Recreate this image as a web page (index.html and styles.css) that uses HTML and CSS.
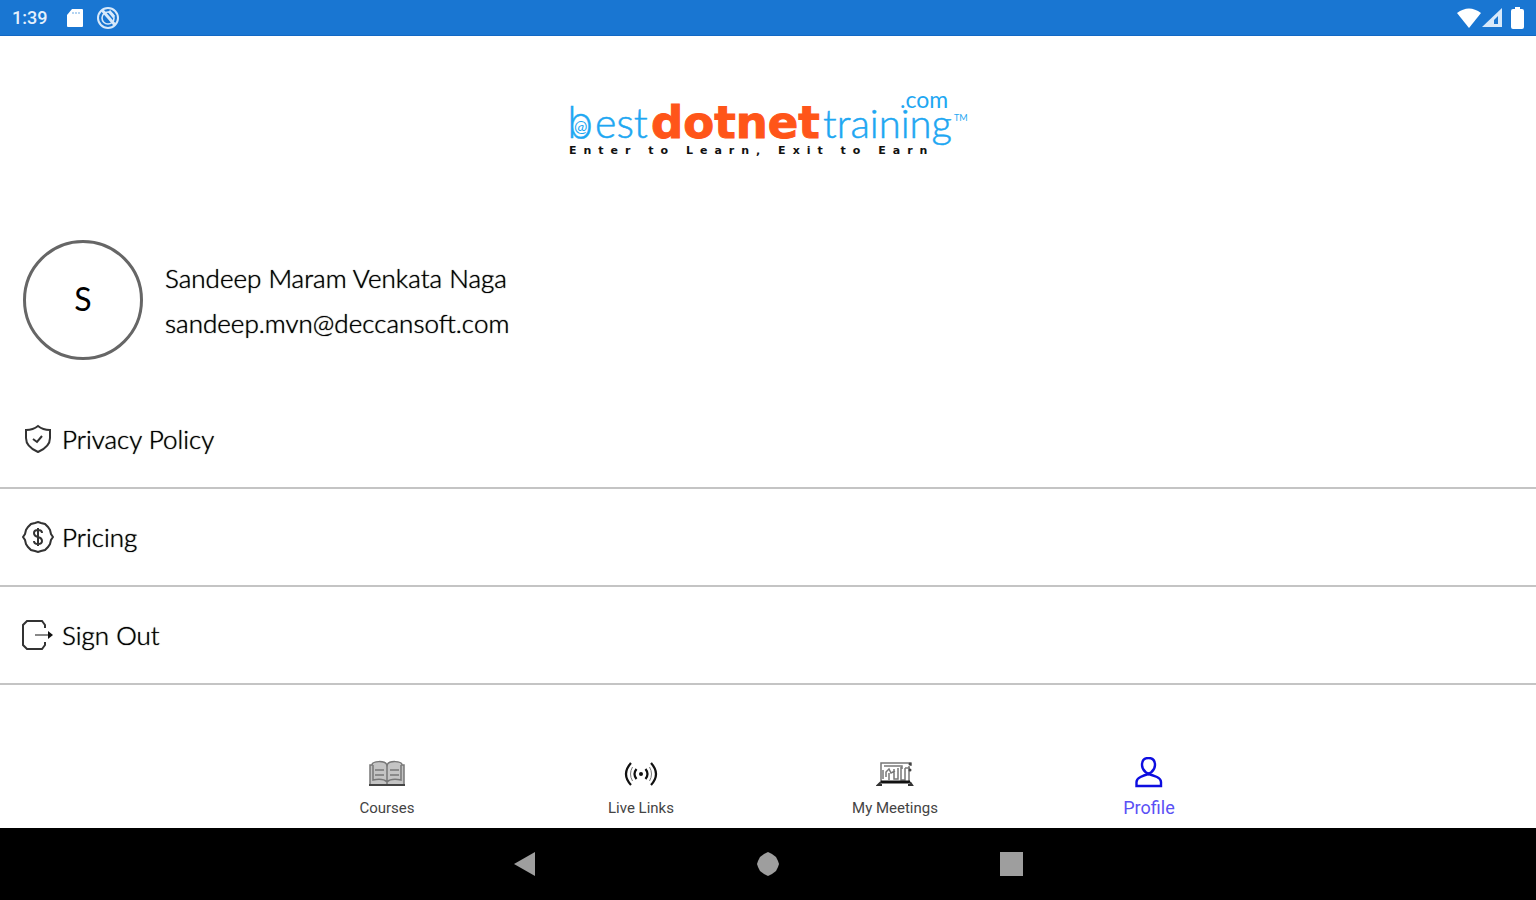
FILE: index.html
```html
<!DOCTYPE html>
<html lang="en">
<head>
<meta charset="utf-8">
<meta name="viewport" content="width=device-width, initial-scale=1">
<title>Profile</title>
<link rel="stylesheet" href="styles.css">
</head>
<body>
<header class="status">
  <div class="status-group">
    <time class="clock">1:39</time>
    <svg class="sd" width="18" height="20" viewBox="0 0 18 20" aria-hidden="true"><path d="M6 1h10a1 1 0 0 1 1 1v16a1 1 0 0 1-1 1H2a1 1 0 0 1-1-1V7z" fill="#fff"/><path d="M7 4v2M10 4v2M13 4v2" stroke="#9cc6ee" stroke-width="1.5"/></svg>
    <svg width="24" height="24" viewBox="0 0 24 24" fill="none" stroke="#d8e9fa" stroke-width="2" aria-hidden="true"><circle cx="12" cy="12" r="10"/><circle cx="12" cy="12" r="6" stroke-width="1.6"/><path d="M6 4l13 15" stroke-width="3"/><path d="M13 5l5 6" stroke-width="3"/></svg>
  </div>
  <div class="status-group signals">
    <svg width="24" height="20" viewBox="0 0 24 20" aria-hidden="true"><path d="M0 5Q12-4 24 5L12 20z" fill="#fff"/></svg>
    <svg width="20" height="20" viewBox="0 0 20 20" aria-hidden="true"><path d="M0 19L20 0v19z" fill="#d8e9fa"/><path d="M12 16V12l4-4v8z" fill="#1976d2"/></svg>
    <svg class="battery" width="13" height="22" viewBox="0 0 13 22" aria-hidden="true"><path d="M4 0h5v2h2a2 2 0 0 1 2 2v16a2 2 0 0 1-2 2H2a2 2 0 0 1-2-2V4a2 2 0 0 1 2-2h2z" fill="#fff"/></svg>
  </div>
</header>

<main class="page">
  <svg class="logo" width="400" height="68" viewBox="0 0 400 68" role="img" aria-label="bestdotnettraining.com">
    <g class="logo-light">
      <text class="logo-b" x="-1" y="46" font-size="44">b</text>
      <text x="27" y="46" font-size="41">est</text>
      <text class="logo-small" x="6" y="40" font-size="16">@</text>
      <text x="255" y="46" font-size="40">training</text>
      <text class="logo-small" x="332" y="16" font-size="23">.com</text>
      <text class="logo-small" x="386" y="29" font-size="9">TM</text>
    </g>
    <text class="logo-bold" x="83" y="46" font-size="45">dotnet</text>
    <text class="logo-tag" x="1" y="62" font-size="11">Enter to Learn, Exit to Earn</text>
  </svg>

  <section class="user">
    <div class="avatar">S</div>
    <div class="user-text">
      <p class="line">Sandeep Maram Venkata Naga</p>
      <p class="line">sandeep.mvn@deccansoft.com</p>
    </div>
  </section>

  <ul class="menu">
    <li><a class="row" href="#privacy">
      <svg class="icon" viewBox="0 0 32 32" aria-hidden="true"><path d="M16 3c3 2.500 7 4 12 4v8c0 7-5 11-12 14C9 26 4 22 4 15V7c5 0 9-1.500 12-4z"/><path d="M11 16l4 3 5-6"/></svg>
      Privacy Policy</a></li>
    <li><a class="row" href="#pricing">
      <svg class="icon" viewBox="0 0 32 32" aria-hidden="true"><path d="M16 1l3 1 4 1 3 3 2 3 1 4 2 3-2 3-1 4-2 3-3 3-4 1-3 1-3-1-4-1-3-3-2-3-1-4-2-3 2-3 1-4 2-3 3-3 4-1z"/><path d="M20 12q0-3-4-3t-4 3 4 4 4 4-4 3-4-3M16 7v18"/></svg>
      Pricing</a></li>
    <li><a class="row" href="#signout">
      <svg class="icon" viewBox="0 0 32 32" aria-hidden="true"><path d="M23 9V6l-3-4H5L1 6v20l4 4h15l3-4v-3"/><path d="M13 16h14" stroke="#888"/><path d="M26 12l5 4-5 4z" fill="#111" stroke="none"/></svg>
      Sign Out</a></li>
  </ul>
</main>

<nav class="tabs">
  <a class="tab" href="#courses">
    <svg width="38" height="32" viewBox="0 0 38 32" fill="none" stroke="#777" stroke-width="1.5" aria-hidden="true"><path d="M2 28V8h2c0-4 13-5 15 0 2-5 15-4 15 0h2v20z" fill="#c4c4c4"/><path d="M19 8v19M5 8v15q10-2 14 2 4-4 14-2V8"/><path d="M7 13h9M7 18h9M22 13h9M22 18h9"/><path d="M1 28h36" stroke="#444" stroke-width="2"/></svg>
    Courses</a>
  <a class="tab" href="#live">
    <svg width="38" height="32" viewBox="0 0 38 32" fill="none" stroke="#111" stroke-width="2.200" aria-hidden="true"><circle cx="19" cy="17" r="2" fill="#111" stroke="none"/><path d="M14.500 12q-4 5 0 10M23.500 12q4 5 0 10"/><path d="M9 6q-10 11 0 22M29 6q10 11 0 22"/><path d="M10.500 10q-4 7 0 14M27.500 10q4 7 0 14" stroke="#777" stroke-width="1"/></svg>
    Live Links</a>
  <a class="tab" href="#meetings">
    <svg width="38" height="32" viewBox="0 0 38 32" fill="none" stroke="#777" stroke-width="1.500" aria-hidden="true"><path d="M5 25V6h30v3M33 9v16M8 9h18v3"/><path d="M7 22V13M10 20v-5l3-3 2 4 4-2M13 16v7M18 12v10h4V11M25 10v13h4V11M29 11h5"/><path d="M5 25h29" stroke="#111" stroke-width="3"/><path d="M5 25l-3 3h4M34 25l2 3h-4" stroke="#333" stroke-width="2"/><circle cx="34" cy="7" r="1.500" fill="#444" stroke="none"/><circle cx="34" cy="13" r="1.500" fill="#444" stroke="none"/></svg>
    My Meetings</a>
  <a class="tab active" href="#profile" aria-current="page">
    <svg width="38" height="32" viewBox="0 0 38 32" fill="none" stroke="#0d0de0" stroke-width="2.400" aria-hidden="true"><path d="M15.500 15Q12 12 12 8q0-7 6.500-7T25 8q0 4-3.500 7l-3 2z"/><path d="M18.500 17q-4 1-8 3-4 2-4 5v4H31v-4q0-3-4-5-5-2-8.500-3z"/></svg>
    Profile</a>
</nav>

<footer class="system">
  <button class="sys" aria-label="Back"><svg width="24" height="26" viewBox="0 0 24 26"><path d="M1 13L22 1v24z" fill="#9e9e9e"/></svg></button>
  <button class="sys" aria-label="Home"><svg width="24" height="26" viewBox="0 0 24 26"><path d="M12 1l4 2 4 3 2 4 1 3-1 3-2 4-4 3-4 2-4-2-4-3-2-4-1-3 1-3 2-4 4-3z" fill="#9e9e9e"/></svg></button>
  <button class="sys" aria-label="Recent apps"><svg width="24" height="26" viewBox="0 0 24 26"><path d="M1 1h23v24H1z" fill="#9e9e9e"/></svg></button>
</footer>
</body>
</html>
```
FILE: styles.css
```css
* { box-sizing: border-box; }
body {
  margin: 0;
  min-height: 100vh;
  display: flex;
  flex-direction: column;
  background: #fff;
  color: #000;
  font-family: Lato, sans-serif;
  font-size: 26px;
  font-weight: 300;
  line-height: 32px;
}
a { color: inherit; text-decoration: none; }
svg { display: block; flex: none; }

.status {
  display: flex;
  justify-content: space-between;
  align-items: center;
  height: 36px;
  padding: 0 12px;
  background: #1976d2;
  border-bottom: 1px solid #1268c4;
}
.status-group { display: flex; align-items: center; gap: 12px; }
.signals { gap: 1px; }
.battery { margin-left: 8px; }
.clock {
  width: 42px;
  color: #e4f0fc;
  font: 500 18px/24px Roboto, sans-serif;
}

.page { flex: 1; }
.logo { margin: 56px auto 0; overflow: visible; }
.logo-light {
  fill: #1ea7f2;
  stroke: #1ea7f2;
  stroke-width: 0.5;
  font-family: Lato, sans-serif;
  font-weight: 300;
}
.logo-b { font-family: Inter, sans-serif; font-weight: 200; }
.logo-small { font-weight: 400; stroke: none; }
.logo-bold {
  fill: #ff5519;
  stroke: #ff5519;
  font-family: "DejaVu Sans", sans-serif;
  font-weight: 700;
}
.logo-tag {
  fill: #111;
  font-family: "DejaVu Sans", sans-serif;
  font-weight: 700;
  letter-spacing: 7px;
}

.user {
  display: flex;
  align-items: center;
  gap: 22px;
  margin-top: 80px;
  padding: 0 23px;
}
.avatar {
  display: flex;
  align-items: center;
  justify-content: center;
  width: 120px;
  height: 120px;
  padding-bottom: 2px;
  border: 3px solid #666;
  border-radius: 50%;
  font-size: 32px;
  font-weight: 400;
}
.user-text { display: grid; gap: 13px; }
.line { margin: 0; }
.line, .row { text-shadow: 0 0 1px #000; }

.menu { margin: 31px 0 0; padding: 0; list-style: none; }
.row {
  display: flex;
  align-items: center;
  gap: 8px;
  height: 98px;
  padding: 0 22px;
  border-bottom: 2px solid #c4c4c4;
}
.icon {
  width: 32px;
  height: 32px;
  fill: none;
  stroke: #333;
  stroke-width: 2;
}

.tabs { display: flex; justify-content: center; padding-bottom: 10px; }
.tab {
  display: flex;
  flex-direction: column;
  align-items: center;
  gap: 9px;
  width: 254px;
  color: #444;
  font: 15px/20px Roboto, sans-serif;
}
.active { color: #5a50f5; font-size: 18px; }

.system {
  display: flex;
  justify-content: center;
  height: 72px;
  background: #000;
}
.sys {
  display: flex;
  align-items: center;
  justify-content: center;
  width: 243px;
  padding: 0;
  border: 0;
  background: none;
}
```
